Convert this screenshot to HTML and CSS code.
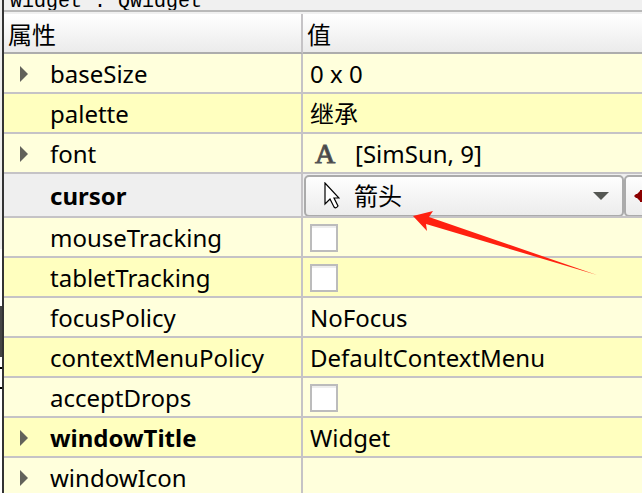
FILE: index.html
```
<!DOCTYPE html>
<html lang="zh-CN">
<head>
    <meta charset="UTF-8">
    <meta name="viewport" content="width=device-width, initial-scale=1.0">
    <title>Widget : QWidget</title>
    <link rel="stylesheet" href="styles.css">
</head>
<body>
    <div class="window">
        <div class="gutter">
            <div class="gutter-dark"></div>
            <div class="gutter-box"></div>
        </div>
        <main class="editor">
            <div class="object-bar">Widget : QWidget</div>
            <table class="props">
                <thead>
                    <tr><th class="name">属性</th><th>值</th></tr>
                </thead>
                <tbody>
                    <tr><td class="name group">baseSize</td><td>0 x 0</td></tr>
                    <tr><td class="name">palette</td><td>继承</td></tr>
                    <tr>
                        <td class="name group">font</td>
                        <td><div class="with-icon"><span class="font-icon">A</span>[SimSun, 9]</div></td>
                    </tr>
                    <tr class="selected">
                        <td class="name"><label for="cursor">cursor</label></td>
                        <td class="edit">
                            <div class="editors">
                                <div class="combo">
                                    <select id="cursor">
                                        <option>箭头</option>
                                    </select>
                                    <svg class="pointer" viewBox="0 0 16 27" width="16" height="27">
                                        <path d="M1 1V22L6 17L10 25Q12 27 14 24L10 16H15Z" fill="#fff" stroke="#000" stroke-width="1.2"/>
                                    </svg>
                                    <svg class="drop" viewBox="0 0 16 8" width="16" height="8">
                                        <path d="M0 0H16L8 8Z" fill="#555753"/>
                                    </svg>
                                </div>
                                <button class="reset" type="button" aria-label="Reset">
                                    <svg viewBox="0 0 20 12" width="20" height="12">
                                        <path d="M0 6L2 4H3L6 1V0H8V3H20V9H8V12H6V11L3 8H2Z" fill="#8b0000"/>
                                    </svg>
                                </button>
                            </div>
                        </td>
                    </tr>
                    <tr><td class="name"><label for="mouse">mouseTracking</label></td><td><input type="checkbox" id="mouse"></td></tr>
                    <tr><td class="name"><label for="tablet">tabletTracking</label></td><td><input type="checkbox" id="tablet"></td></tr>
                    <tr><td class="name">focusPolicy</td><td>NoFocus</td></tr>
                    <tr><td class="name">contextMenuPolicy</td><td>DefaultContextMenu</td></tr>
                    <tr><td class="name"><label for="drops">acceptDrops</label></td><td><input type="checkbox" id="drops"></td></tr>
                    <tr class="changed"><td class="name group">windowTitle</td><td>Widget</td></tr>
                    <tr><td class="name group">windowIcon</td><td></td></tr>
                </tbody>
            </table>
            <svg class="callout" viewBox="0 0 186 66" width="186" height="66">
                <path d="M0 5L20 0L16 6L184 64L13 13L14 20Z" fill="#ff2110"/>
            </svg>
        </main>
    </div>
</body>
</html>
```
FILE: styles.css
```
* {
    box-sizing: border-box;
}
body {
    margin: 0;
    height: 100vh;
    overflow: hidden;
    background: #f0f0f0;
    color: #000;
    font-family: "Noto Sans", "Noto Sans CJK SC", sans-serif;
    font-size: 24px;
    line-height: 32px;
}
.window {
    display: flex;
    height: 100%;
}
.gutter {
    flex: none;
    width: 2px;
    padding-top: 306px;
    background: linear-gradient(#eee 249px, #fff 249px);
}
.gutter-dark {
    height: 51px;
    background: #444;
}
.gutter-box {
    height: 22px;
    margin-top: 10px;
    border: solid #000;
    border-width: 2px 0;
    background: #fff;
}
.editor {
    position: relative;
    flex: 1;
    min-width: 0;
    border-left: 2px solid #333;
}
.object-bar {
    display: flex;
    align-items: flex-end;
    height: 12px;
    padding-left: 6px;
    border-bottom: 2px solid #b9b9b9;
    font-family: "Liberation Mono", monospace;
    font-size: 20px;
    line-height: 16px;
    overflow: hidden;
}
.props {
    width: 100%;
    margin-top: 2px;
    border-collapse: separate;
    border-spacing: 0;
    table-layout: fixed;
}
th,
td {
    height: 40px;
    padding: 2px 7px 0;
    border-bottom: 2px solid #c5c3c6;
    text-align: left;
    white-space: nowrap;
}
th {
    padding: 4px 4px 0;
    border-bottom-color: #adadad;
    background: linear-gradient(#fff, #ebebeb);
    font-weight: normal;
}
.name {
    width: 299px;
    border-right: 2px solid #c5c3c6;
}
td.name {
    padding-left: 46px;
}
tbody tr {
    background: #ffffdc;
}
tbody tr:nth-child(even) {
    background: #ffffbf;
}
tbody tr.selected {
    background: #efefef;
}
.selected td {
    height: 44px;
}
.selected .name,
.changed .name {
    font-weight: bold;
}
.group::before {
    content: "";
    float: left;
    margin: 8px 0 0 -30px;
    border: solid transparent;
    border-width: 8px 0 8px 8px;
    border-left-color: #62625a;
}
.with-icon {
    display: flex;
    align-items: center;
}
.font-icon {
    width: 45px;
    padding-left: 5px;
    color: #444;
    font-family: "Liberation Serif", serif;
    font-size: 28px;
    -webkit-text-stroke: 1px #555;
}
input[type="checkbox"] {
    display: block;
    appearance: none;
    width: 28px;
    height: 28px;
    margin: 0;
    border: 2px solid #bcbcbc;
    background: linear-gradient(#eee 2px, #fff 2px);
}
.selected .edit {
    padding: 1px 0 0 1px;
    overflow: hidden;
}
.editors {
    display: flex;
}
.combo {
    position: relative;
    flex: 1;
}
select,
.reset {
    height: 42px;
    border: 2px solid #ababab;
    border-radius: 5px;
    background: linear-gradient(#fefefe, #ececec);
    color: #000;
    font: inherit;
}
.edit select,
.edit .reset {
    margin-bottom: -1px;
}
select {
    display: block;
    appearance: none;
    width: 100%;
    padding: 0 40px 0 48px;
}
.pointer {
    position: absolute;
    top: 7px;
    left: 20px;
}
.drop {
    position: absolute;
    top: 17px;
    right: 15px;
}
.reset {
    flex: none;
    width: 40px;
    margin-right: -22px;
    padding: 0 8px;
}
.reset svg {
    display: block;
}
.callout {
    position: absolute;
    top: 211px;
    left: 409px;
}
```
